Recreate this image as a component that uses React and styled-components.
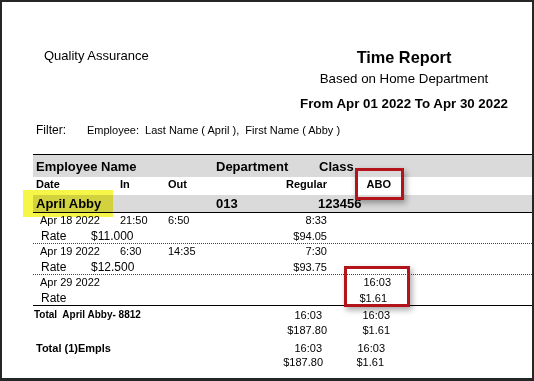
import React from "react";
import styled, { createGlobalStyle } from "styled-components";

const GlobalStyle = createGlobalStyle`
    html, body {
        margin: 0;
        padding: 0;
        background: #fff;
    }
    * {
        box-sizing: border-box;
    }
`;

const Frame = styled.div`
    position: relative;
    width: 534px;
    height: 381px;
    overflow: hidden;
    background: #fff;
    border-style: solid;
    border-color: #262626;
    border-width: 2px 2px 3px 2px;
    font-family: "Liberation Sans", Arial, sans-serif;
    color: #000;
`;

const Header = styled.div`
    display: flex;
    align-items: flex-start;
    padding: 46px 8px 0 42px;
`;

const Company = styled.div`
    font-size: 13px;
    line-height: 16px;
`;

const TitleBlock = styled.div`
    margin-left: auto;
    margin-top: -1px;
    width: 240px;
    display: flex;
    flex-direction: column;
    align-items: center;
`;

const Title = styled.div`
    font-size: 16.3px;
    line-height: 20px;
    font-weight: bold;
`;

const SubTitle = styled.div`
    margin-top: ${props => props.$gap || 0}px;
    font-size: 13.3px;
    line-height: 16px;
    font-weight: ${props => (props.$bold ? "bold" : "normal")};
`;

const FilterRow = styled.div`
    display: flex;
    align-items: center;
    margin-top: 11px;
    padding-left: 34px;
    height: 14px;
`;

const FilterLabel = styled.div`
    width: 51px;
    font-size: 12px;
`;

const FilterText = styled.div`
    font-size: 11px;
    white-space: pre;
`;

const Table = styled.div`
    margin: 17px 0 0 31px;
    border-top: 1px solid #000;
`;

const HeaderBand = styled.div`
    display: grid;
    grid-template-columns: 180px 103px 1fr;
    align-items: center;
    height: 22px;
    padding-left: 3px;
    background: #dadada;
    font-size: 13px;
    font-weight: bold;
`;

const Cols = styled.div`
    display: grid;
    grid-template-columns: 87px 48px 48px 111px 64px 1fr;
    align-items: start;
`;

const SubHead = styled(Cols)`
    height: 18px;
    font-size: 11px;
    line-height: 14px;
    font-weight: bold;
    padding-left: 3px;
    grid-template-columns: 84px 48px 48px 111px 64px 1fr;
`;

const NameBand = styled.div`
    display: grid;
    grid-template-columns: 180px 102px 1fr;
    align-items: center;
    height: 18px;
    padding-left: 3px;
    background: #dadada;
    border-bottom: 1px solid #000;
    font-size: 13px;
    font-weight: bold;
`;

const Record = styled.div`
    border-bottom: 1px ${props => (props.$last ? "solid #000" : "dotted #444")};
`;

const DateRow = styled(Cols)`
    height: 13px;
    padding-top: 1px;
    font-size: 11px;
    line-height: 12px;
`;

const RateRow = styled(Cols)`
    height: 17px;
    padding-top: 3px;
    font-size: 11px;
    line-height: 14px;
`;

const DateCell = styled.div`
    padding-left: 7px;
`;

const RateCell = styled.div`
    grid-column: 1 / span 3;
    display: flex;
    padding-left: 8px;
    font-size: 12px;
`;

const RateLabel = styled.span`
    width: 50px;
`;

const Value = styled.div`
    text-align: right;
    padding-right: ${props => props.$pad || 0}px;
    white-space: nowrap;
`;

const ValueCell = styled(Value)`
    grid-column: ${props => props.$col};
`;

const TotalRow = styled(Cols)`
    height: ${props => props.$h || 16}px;
    margin-top: ${props => props.$mt || 0}px;
    padding-top: ${props => props.$pt || 0}px;
    font-size: 11px;
    line-height: 14px;
`;

const TotalLabel = styled.div`
    grid-column: 1 / span 3;
    padding-left: ${props => props.$pl || 1}px;
    font-size: ${props => props.$size || 10}px;
    font-weight: bold;
    white-space: pre;
`;

const Highlight = styled.div`
    position: absolute;
    left: 21px;
    top: 188px;
    width: 90px;
    height: 27px;
    background: #f6f648;
    mix-blend-mode: multiply;
    filter: blur(0.6px);
`;

const Callout = styled.div`
    position: absolute;
    left: ${props => props.$x}px;
    top: ${props => props.$y}px;
    width: ${props => props.$w}px;
    height: ${props => props.$h}px;
    border: 3px solid #b3141c;
    box-shadow: 2px 3px 6px rgba(0, 0, 0, 0.35);
`;

const records = [
    { date: "Apr 18 2022", tin: "21:50", tout: "6:50", reg: "8:33", rate: "$11.000", pay: "$94.05" },
    { date: "Apr 19 2022", tin: "6:30", tout: "14:35", reg: "7:30", rate: "$12.500", pay: "$93.75" },
    { date: "Apr 29 2022", abo: "16:03", aboPay: "$1.61" },
];

export default function App() {
    return (
        <Frame>
            <GlobalStyle />
            <Header>
                <Company>Quality Assurance</Company>
                <TitleBlock>
                    <Title>Time Report</Title>
                    <SubTitle $gap={4}>Based on Home Department</SubTitle>
                    <SubTitle $gap={9} $bold>From Apr 01 2022 To Apr 30 2022</SubTitle>
                </TitleBlock>
            </Header>

            <FilterRow>
                <FilterLabel>Filter:</FilterLabel>
                <FilterText>Employee:  Last Name ( April ),  First Name ( Abby )</FilterText>
            </FilterRow>

            <Table>
                <HeaderBand>
                    <div>Employee Name</div>
                    <div>Department</div>
                    <div>Class</div>
                </HeaderBand>
                <SubHead>
                    <div>Date</div>
                    <div>In</div>
                    <div>Out</div>
                    <Value>Regular</Value>
                    <Value>ABO</Value>
                </SubHead>
                <NameBand>
                    <div>April Abby</div>
                    <div>013</div>
                    <div>123456</div>
                </NameBand>

                {records.map((r, i) => (
                    <Record key={r.date} $last={i === records.length - 1}>
                        <DateRow>
                            <DateCell>{r.date}</DateCell>
                            <div>{r.tin}</div>
                            <div>{r.tout}</div>
                            <Value>{r.reg}</Value>
                            <Value>{r.abo}</Value>
                        </DateRow>
                        <RateRow>
                            <RateCell>
                                <RateLabel>Rate</RateLabel>
                                <span>{r.rate}</span>
                            </RateCell>
                            <ValueCell $col={4}>{r.pay}</ValueCell>
                            <ValueCell $col={5} $pad={4}>{r.aboPay}</ValueCell>
                        </RateRow>
                    </Record>
                ))}

                <TotalRow $pt={2}>
                    <TotalLabel>Total  April Abby- 8812</TotalLabel>
                    <Value $pad={5}>16:03</Value>
                    <Value $pad={1}>16:03</Value>
                </TotalRow>
                <TotalRow $pt={1}>
                    <ValueCell $col={4}>$187.80</ValueCell>
                    <ValueCell $col={5} $pad={1}>$1.61</ValueCell>
                </TotalRow>
                <TotalRow $mt={3} $h={14}>
                    <TotalLabel $pl={3} $size={11}>Total (1)Empls</TotalLabel>
                    <Value $pad={5}>16:03</Value>
                    <Value $pad={6}>16:03</Value>
                </TotalRow>
                <TotalRow $h={14}>
                    <ValueCell $col={4} $pad={4}>$187.80</ValueCell>
                    <ValueCell $col={5} $pad={7}>$1.61</ValueCell>
                </TotalRow>
            </Table>

            <Highlight />
            <Callout $x={353} $y={166} $w={49} $h={32} />
            <Callout $x={342} $y={264} $w={66} $h={41} />
        </Frame>
    );
}
